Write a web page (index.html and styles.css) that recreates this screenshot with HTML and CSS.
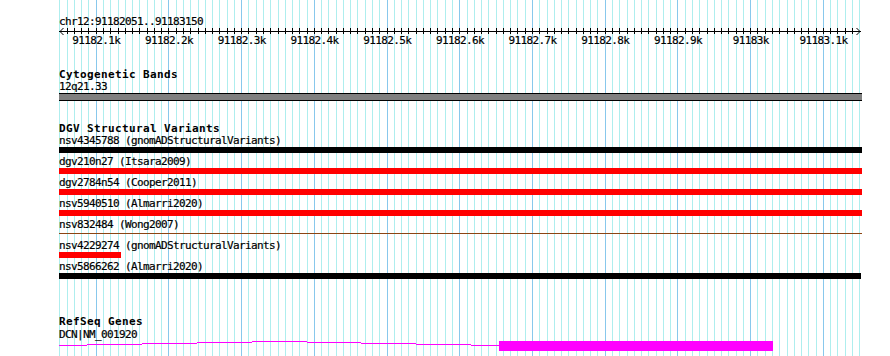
FILE: index.html
```html
<!DOCTYPE html>
<html>
<head>
<meta charset="utf-8">
<title>Genome browser</title>
<link rel="stylesheet" href="styles.css">
</head>
<body>
<div class="browser">
  <svg class="grid" width="803" height="356" viewBox="0 0 803 356" shape-rendering="crispEdges">
    <path class="minor" d="M0.5 0V356M8.5 0V356M15.5 0V356M22.5 0V356M29.5 0V356M44.5 0V356M51.5 0V356M59.5 0V356M66.5 0V356M73.5 0V356M80.5 0V356M88.5 0V356M95.5 0V356M102.5 0V356M117.5 0V356M124.5 0V356M131.5 0V356M139.5 0V356M146.5 0V356M153.5 0V356M160.5 0V356M168.5 0V356M175.5 0V356M189.5 0V356M197.5 0V356M204.5 0V356M211.5 0V356M219.5 0V356M226.5 0V356M233.5 0V356M240.5 0V356M248.5 0V356M262.5 0V356M269.5 0V356M277.5 0V356M284.5 0V356M291.5 0V356M298.5 0V356M306.5 0V356M313.5 0V356M320.5 0V356M335.5 0V356M342.5 0V356M349.5 0V356M357.5 0V356M364.5 0V356M371.5 0V356M378.5 0V356M386.5 0V356M393.5 0V356M408.5 0V356M415.5 0V356M422.5 0V356M429.5 0V356M437.5 0V356M444.5 0V356M451.5 0V356M458.5 0V356M466.5 0V356M480.5 0V356M488.5 0V356M495.5 0V356M502.5 0V356M509.5 0V356M517.5 0V356M524.5 0V356M531.5 0V356M538.5 0V356M553.5 0V356M560.5 0V356M568.5 0V356M575.5 0V356M582.5 0V356M589.5 0V356M597.5 0V356M604.5 0V356M611.5 0V356M626.5 0V356M633.5 0V356M640.5 0V356M648.5 0V356M655.5 0V356M662.5 0V356M669.5 0V356M677.5 0V356M684.5 0V356M698.5 0V356M706.5 0V356M713.5 0V356M720.5 0V356M728.5 0V356M735.5 0V356M742.5 0V356M749.5 0V356M757.5 0V356M771.5 0V356M778.5 0V356M786.5 0V356M793.5 0V356M800.5 0V356"/>
    <path class="major" d="M37.5 0V356M109.5 0V356M182.5 0V356M255.5 0V356M328.5 0V356M400.5 0V356M473.5 0V356M546.5 0V356M618.5 0V356M691.5 0V356M764.5 0V356"/>
  </svg>

  <div class="content">
    <div class="locus">chr12:91182051..91183150</div>

    <svg class="axis" width="803" height="8" viewBox="0 0 803 8">
      <path class="axis-line" shape-rendering="crispEdges" d="M0 4.5H802"/>
      <path class="axis-ticks" shape-rendering="crispEdges" d="M8.5 1V7M15.5 1V7M22.5 1V7M29.5 1V7M37.5 1V7M44.5 1V7M51.5 1V7M59.5 1V7M66.5 1V7M73.5 1V7M80.5 1V7M88.5 1V7M95.5 1V7M102.5 1V7M109.5 1V7M117.5 1V7M124.5 1V7M131.5 1V7M139.5 1V7M146.5 1V7M153.5 1V7M160.5 1V7M168.5 1V7M175.5 1V7M182.5 1V7M189.5 1V7M197.5 1V7M204.5 1V7M211.5 1V7M219.5 1V7M226.5 1V7M233.5 1V7M240.5 1V7M248.5 1V7M255.5 1V7M262.5 1V7M269.5 1V7M277.5 1V7M284.5 1V7M291.5 1V7M298.5 1V7M306.5 1V7M313.5 1V7M320.5 1V7M328.5 1V7M335.5 1V7M342.5 1V7M349.5 1V7M357.5 1V7M364.5 1V7M371.5 1V7M378.5 1V7M386.5 1V7M393.5 1V7M400.5 1V7M408.5 1V7M415.5 1V7M422.5 1V7M429.5 1V7M437.5 1V7M444.5 1V7M451.5 1V7M458.5 1V7M466.5 1V7M473.5 1V7M480.5 1V7M488.5 1V7M495.5 1V7M502.5 1V7M509.5 1V7M517.5 1V7M524.5 1V7M531.5 1V7M538.5 1V7M546.5 1V7M553.5 1V7M560.5 1V7M568.5 1V7M575.5 1V7M582.5 1V7M589.5 1V7M597.5 1V7M604.5 1V7M611.5 1V7M618.5 1V7M626.5 1V7M633.5 1V7M640.5 1V7M648.5 1V7M655.5 1V7M662.5 1V7M669.5 1V7M677.5 1V7M684.5 1V7M691.5 1V7M698.5 1V7M706.5 1V7M713.5 1V7M720.5 1V7M728.5 1V7M735.5 1V7M742.5 1V7M749.5 1V7M757.5 1V7M764.5 1V7M771.5 1V7M778.5 1V7M786.5 1V7M793.5 1V7"/>
      <path class="axis-arrow" d="M4.5 1L1 4.5L4.5 8"/>
      <path class="axis-arrow" d="M797.5 1L801 4.5L797.5 8"/>
    </svg>

    <div class="tick-labels">
      <span>91182.1k</span><span>91182.2k</span><span>91182.3k</span><span>91182.4k</span><span>91182.5k</span><span>91182.6k</span><span>91182.7k</span><span>91182.8k</span><span>91182.9k</span><span>91183k</span><span>91183.1k</span>
    </div>

    <section class="track cyto">
      <h2 class="track-label">Cytogenetic Bands</h2>
      <div class="feature-label">12q21.33</div>
      <div class="band"></div>
    </section>

    <section class="track dgv">
      <h2 class="track-label">DGV Structural Variants</h2>
      <div class="feature">
        <div class="feature-label">nsv4345788 (gnomADStructuralVariants)</div>
        <div class="bar black" style="width:803px"></div>
      </div>
      <div class="feature">
        <div class="feature-label">dgv210n27 (Itsara2009)</div>
        <div class="bar red" style="width:803px"></div>
      </div>
      <div class="feature">
        <div class="feature-label">dgv2784n54 (Cooper2011)</div>
        <div class="bar red" style="width:803px"></div>
      </div>
      <div class="feature">
        <div class="feature-label">nsv5940510 (Almarri2020)</div>
        <div class="bar red" style="width:803px"></div>
      </div>
      <div class="feature">
        <div class="feature-label">nsv832484 (Wong2007)</div>
        <div class="bar thin brown" style="width:803px"></div>
      </div>
      <div class="feature">
        <div class="feature-label">nsv4229274 (gnomADStructuralVariants)</div>
        <div class="bar red" style="width:62px"></div>
      </div>
      <div class="feature">
        <div class="feature-label">nsv5866262 (Almarri2020)</div>
        <div class="bar black" style="width:802px"></div>
      </div>
    </section>

    <section class="track refseq">
      <h2 class="track-label">RefSeq Genes</h2>
      <div class="feature-label">DCN|NM_001920</div>
      <svg class="gene" width="803" height="12" viewBox="0 0 803 12" shape-rendering="crispEdges">
        <path class="intron" d="M0 5h28v1H0zM28 4h55v1H28zM83 3h55v1H83zM138 2h55v1h-55zM193 1h55v1h-55zM248 2h54v1h-54zM302 3h55v1h-55zM357 4h55v1h-55zM412 5h28v1h-28z"/>
        <rect class="exon" x="440" y="1" width="274" height="10"/>
      </svg>
    </section>
  </div>
</div>
</body>
</html>
```

FILE: styles.css
```css
html, body {
  margin: 0;
  padding: 0;
  background: #ffffff;
}

body {
  font-family: "DejaVu Sans Mono", "Liberation Mono", monospace;
  font-size: 11px;
  letter-spacing: -0.62px;
  line-height: 11px;
  color: #000000;
  -webkit-text-stroke: 0.2px #000000;
}

.browser {
  position: relative;
  margin-left: 59px;
  width: 803px;
  height: 356px;
  padding-top: 16px;
  box-sizing: border-box;
  overflow: hidden;
}

.grid {
  position: absolute;
  left: 0;
  top: 0;
  display: block;
}

.grid .minor {
  stroke: #aeeeee;
  stroke-width: 1;
  fill: none;
}

.grid .major {
  stroke: #88c8ec;
  stroke-width: 1;
  fill: none;
}

.content {
  position: relative;
}

.locus {
  height: 11px;
  white-space: nowrap;
}

.axis {
  display: block;
}

.axis-line,
.axis-ticks,
.axis-arrow {
  stroke: #000000;
  stroke-width: 1;
  fill: none;
}

.tick-labels {
  display: flex;
  height: 11px;
  margin-left: 0.95px;
  white-space: nowrap;
}

.tick-labels span {
  flex: 0 0 72.72px;
  text-align: center;
}

.track-label {
  margin: 0;
  font-size: 11px;
  line-height: 11px;
  font-weight: bold;
  letter-spacing: 0.38px;
  white-space: nowrap;
  -webkit-text-stroke: 0;
}

.feature-label {
  height: 11px;
  white-space: nowrap;
}

.cyto .track-label {
  margin-top: 23px;
  margin-bottom: 1px;
}

.band {
  margin-top: 1px;
  width: 803px;
  height: 6px;
  background: #808080;
  border-top: 1px solid #000000;
  border-bottom: 1px solid #000000;
}

.dgv .track-label {
  margin-top: 22px;
  margin-bottom: 1px;
}

.feature {
  padding-bottom: 3px;
}

.bar {
  margin-top: 1px;
  height: 6px;
}

.bar.black {
  background: #000000;
}

.bar.red {
  background: #ff0000;
}

.bar.thin {
  height: 1px;
  margin-top: 3px;
  margin-bottom: 3px;
}

.bar.brown {
  background: #8b4513;
}

.refseq .track-label {
  margin-top: 34px;
  margin-bottom: 2px;
}

.gene {
  display: block;
}

.gene .intron {
  fill: #ff00ff;
}

.gene .exon {
  fill: #ff00ff;
}
```
